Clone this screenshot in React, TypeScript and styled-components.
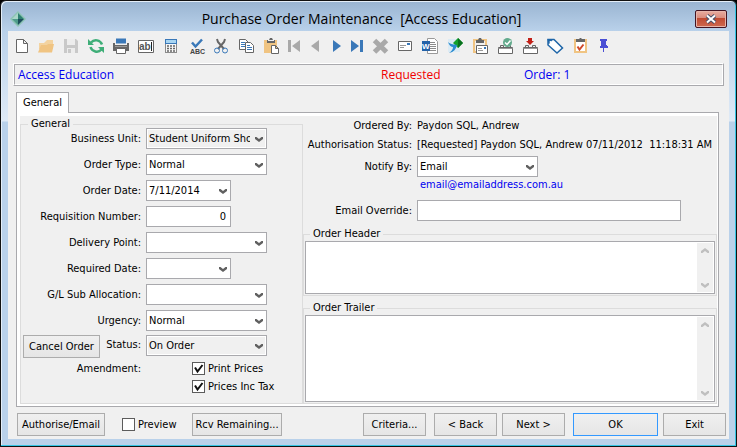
import React, { useState } from "react";
import styled, { createGlobalStyle, css } from "styled-components";

const face = "#f0f0f0";
const line = "#a9a9ad";
const soft = "#dcdcdc";
const grey = "#666666";
const blue = "#3a78b8";

const GlobalStyle = createGlobalStyle`
  *, *::before, *::after { box-sizing: border-box; }
  body { margin: 0; background: #000; }
  body, button, input, select, textarea {
    font-family: "DejaVu Sans Condensed", "DejaVu Sans", Tahoma, sans-serif;
    font-size: 11px;
    line-height: 14px;
    color: #000;
  }
`;

const Frame = styled.div`
  display: flex;
  flex-direction: column;
  min-height: 100vh;
  border: 1px solid #111;
  border-radius: 6px 6px 0 0;
  background: #b9d1ea;
  box-shadow: inset -1px -1px 0 #35c5e4, inset 1px 1px 0 #e4eef8;
  background-image: linear-gradient(#99b4d1, #b9d1ea 30px, #dfeaf6 120px, #b9d1ea 121px);
  padding: 1px 7px 7px;
`;

const TitleBar = styled.header`
  display: flex;
  align-items: center;
  height: 29px;
  padding: 4px 2px 0;
`;

const Title = styled.h1`
  flex: 1;
  margin: 0;
  padding-left: 2px;
  text-align: center;
  white-space: pre;
  font: 400 14px/20px "Open Sans", "Segoe UI", sans-serif;
`;

const CloseButton = styled.button`
  display: flex;
  align-items: center;
  justify-content: center;
  width: 32px;
  height: 18px;
  padding: 0;
  border: 1px solid #431422;
  border-radius: 2px;
  background: linear-gradient(#e8aca0, #d98b7c 45%, #bf4a32 46%, #cf6a50);
  box-shadow: inset 0 0 0 1px #e6b4aa;
`;

const Client = styled.main`
  display: flex;
  flex: 1;
  flex-direction: column;
  background: ${face};
`;

const Toolbar = styled.div`
  display: flex;
  height: 32px;
  padding: 5px 1px 0;
`;

const ToolButton = styled.button<{ $narrow?: boolean }>`
  flex: none;
  width: ${(p) => (p.$narrow ? 21 : 25)}px;
  height: 20px;
  padding: 0;
  border: 0;
  background: none;
  svg { display: block; }
`;

const Banner = styled.div`
  margin: 0 5px;
  border: 1px solid;
  border-color: #fff ${line} ${line} #fff;
`;

const BannerInner = styled.div`
  display: grid;
  grid-template-columns: 363px 143px 1fr;
  height: 21px;
  padding-left: 3px;
  border: 1px solid;
  border-color: ${line} #fff #fff ${line};
  font-family: "Open Sans", "Segoe UI", sans-serif;
  font-size: 12px;
  line-height: 20px;
  color: #0000f0;
`;

const Requested = styled.span`
  color: #f00000;
`;

const TabStrip = styled.div`
  display: flex;
  padding: 6px 8px 0;
`;

const Tab = styled.button`
  width: 53px;
  height: 21px;
  margin-bottom: -1px;
  padding: 0;
  border: 1px solid ${line};
  border-bottom: 0;
  background: #fff;
  z-index: 1;
`;

const TabPage = styled.section`
  display: flex;
  flex: 1;
  margin: 0 10px 0 8px;
  padding: 3px 1px 2px 3px;
  border: 1px solid ${line};
  background: #fff;
`;

const Columns = styled.div`
  display: flex;
  flex: 1;
  background: ${face};
`;

const Group = styled.fieldset<{ $fill?: boolean }>`
  display: flex;
  flex-direction: column;
  ${(p) => p.$fill && css`flex: 1;`}
  min-width: 0;
  margin: 0;
  padding: 0 1px 1px;
  border: 1px solid ${soft};
  legend {
    height: 14px;
    margin-left: 5px;
    padding: 0 3px;
  }
`;

const LeftGroup = styled(Group)`
  flex: none;
  width: 283px;
  margin-top: 1px;
  padding: 0 2px;
`;

const FieldList = styled.div`
  display: flex;
  flex-direction: column;
  gap: 5px;
  margin-top: -3px;
`;

const Row = styled.div`
  display: flex;
  align-items: center;
  height: 21px;
`;

const StatusRow = styled(Row)`
  align-items: flex-start;
  height: 23px;
  margin-top: 4px;
`;

const Label = styled.label<{ $wide?: boolean }>`
  flex: none;
  width: ${(p) => (p.$wide ? 109 : 118)}px;
  margin-right: 5px;
  text-align: right;
  white-space: nowrap;
`;

const StatusLabel = styled.label`
  flex: 1;
  margin-right: 5px;
  line-height: 20px;
  text-align: right;
`;

const StatusLead = styled.div`
  display: flex;
  flex: none;
  width: 123px;
`;

const ComboWrap = styled.div<{ $short?: boolean }>`
  display: grid;
  flex: none;
  width: ${(p) => (p.$short ? 85 : 121)}px;
  height: 21px;
  align-items: center;
  > * { grid-area: 1 / 1; }
  svg { justify-self: end; margin-right: 4px; pointer-events: none; }
`;

const ComboSelect = styled.select<{ $muted?: boolean }>`
  width: 100%;
  height: 21px;
  padding: 0 16px 0 2px;
  border: 1px solid ${line};
  border-radius: 0;
  appearance: none;
  background: ${(p) => (p.$muted ? face : "#fff")};
  box-shadow: inset 0 0 0 1px #fff;
`;

const TextBox = styled.input<{ $number?: boolean }>`
  height: 21px;
  border: 1px solid ${line};
  background: #fff;
  ${(p) =>
    p.$number
      ? css`width: 85px; padding: 0 4px 0 2px; text-align: right;`
      : css`flex: 1; min-width: 0; margin-right: 36px; padding: 0 2px;`}
`;

const Button = styled.button<{ $size?: "lead" | "cancel" | "wide" | "ok"; $primary?: boolean }>`
  flex: none;
  width: ${(p) => ({ lead: 88, cancel: 77, wide: 90, ok: 85, base: 63 })[p.$size ?? "base"]}px;
  height: 23px;
  padding: 0;
  border: 1px solid ${(p) => (p.$primary ? "#3399ff" : "#acacac")};
  background: linear-gradient(#f0f0f0, #e5e5e5);
  white-space: nowrap;
`;

const Amendments = styled.div`
  display: flex;
  padding-top: 3px;
  line-height: 16px;
`;

const CheckList = styled.div`
  display: flex;
  flex-direction: column;
  gap: 5px;
  padding: 1px 0 0 46px;
`;

const CheckLabel = styled.label`
  display: flex;
  align-items: center;
  gap: 3px;
  height: 13px;
  white-space: nowrap;
`;

const CheckHolder = styled.span`
  display: grid;
  > * { grid-area: 1 / 1; }
  svg { pointer-events: none; }
`;

const CheckInput = styled.input`
  width: 13px;
  height: 13px;
  margin: 0;
  appearance: none;
  border: 1px solid #5c5c5c;
  background: #fff;
`;

const RightColumn = styled.div`
  display: flex;
  flex: 1;
  flex-direction: column;
  min-width: 0;
`;

const Info = styled.div`
  display: flex;
  height: 19px;
  align-items: center;
  white-space: pre;
`;

const NotifyRow = styled(Row)`
  margin-top: 2px;
`;

const MailLink = styled.a`
  align-self: flex-start;
  margin: 1px 0 8px 117px;
  color: #0000f0;
  text-decoration: none;
`;

const Groups = styled.div`
  display: flex;
  flex: 1;
  flex-direction: column;
  gap: 5px;
  margin-top: 6px;
`;

const MemoBox = styled.div<{ $fill?: boolean }>`
  display: flex;
  ${(p) => (p.$fill ? css`flex: 1;` : css`height: 53px;`)}
  padding: 1px;
  border: 1px solid ${line};
  background: #fff;
`;

const MemoText = styled.textarea`
  flex: 1;
  min-width: 0;
  min-height: 20px;
  padding: 1px;
  border: 0;
  resize: none;
  overflow: hidden;
`;

const Rail = styled.div`
  display: flex;
  flex-direction: column;
  align-items: center;
  justify-content: space-between;
  width: 16px;
  padding: 5px 0 4px;
  background: ${face};
`;

const Footer = styled.footer`
  display: flex;
  align-items: flex-start;
  gap: 5px;
  height: 32px;
  padding: 6px 3px 0 9px;
`;

const Preview = styled.div`
  flex: none;
  width: 77px;
  padding: 5px 0 0 12px;
`;

const Spacer = styled.div`
  flex: 1;
`;

const Pair = styled.div`
  display: flex;
  gap: 8px;
`;

const Chevron = ({ up, color = "#606060" }: { up?: boolean; color?: string }) => (
  <svg width="8" height="6" viewBox="0 0 8 6" aria-hidden="true">
    <path d={up ? "M0 5V3l4-3 4 3v2H6.500L4 3 1.500 5z" : "M0 1v2l4 3 4-3V1H6.500L4 3 1.500 1z"} fill={color} />
  </svg>
);

type ComboProps = { id: string; label: string; value?: string; short?: boolean; muted?: boolean };

const Combo = ({ id, value = "", short, muted }: Omit<ComboProps, "label">) => (
  <ComboWrap $short={short}>
    <ComboSelect id={id} $muted={muted} defaultValue={value}>
      <option value={value}>{value}</option>
    </ComboSelect>
    <Chevron />
  </ComboWrap>
);

const ComboRow = ({ label, ...rest }: ComboProps) => (
  <Row>
    <Label htmlFor={rest.id}>{label}</Label>
    <Combo {...rest} />
  </Row>
);

const CheckBox = ({ label, initial = false }: { label: string; initial?: boolean }) => {
  const [on, setOn] = useState(initial);
  return (
    <CheckLabel>
      <CheckHolder>
        <CheckInput type="checkbox" checked={on} onChange={() => setOn(!on)} />
        {on && (
          <svg width="13" height="13" viewBox="0 0 13 13" aria-hidden="true">
            <path d="M3 5.500l2.500 4L10.500 3" fill="none" stroke="#111" strokeWidth="2" />
          </svg>
        )}
      </CheckHolder>
      {label}
    </CheckLabel>
  );
};

const Memo = ({ title, fill }: { title: string; fill?: boolean }) => (
  <Group $fill={fill}>
    <legend>{title}</legend>
    <MemoBox $fill={fill}>
      <MemoText aria-label={title} />
      <Rail>
        <Chevron up color="#bfbfbf" />
        <Chevron color="#bfbfbf" />
      </Rail>
    </MemoBox>
  </Group>
);

const tray = (
  <g fill="#fff" stroke={grey}>
    <path d="M5.500 11.500h14v6h-14z" />
    <path d="M7.500 11.500v-2h3v2M14.500 11.500v-2h3v2" fill="none" />
    <path d="M5.500 12.500h14" stroke="#999" />
  </g>
);

const tools: { name: string; narrow?: boolean; art: React.ReactNode }[] = [
  { name: "New", art: <path d="M7.500 3.500h7l4 4v9h-11zM14.500 3.500v4h4" fill="#fff" stroke={grey} /> },
  {
    name: "Open",
    art: (
      <>
        <path d="M5 7h5l1.500-1.500L13 4h6v9H5z" fill="#f3d3a0" />
        <path d="M4 16.500L7 9h6l1-1h6l-2 8.500z" fill="#f0c482" />
      </>
    ),
  },
  {
    name: "Save",
    art: (
      <>
        <path d="M5 3h12l2 2v12H5z" fill="#c9c9c9" />
        <path d="M8 3h8v6H8zM8 12h8v5H8z" fill="#ededed" />
        <path d="M9 13h3v4H9z" fill="#c9c9c9" />
      </>
    ),
  },
  {
    name: "Refresh",
    art: (
      <>
        <path d="M7 6.500A6.500 6.500 0 0 1 18 8.500M17.500 13.500A6.500 6.500 0 0 1 6.500 11" fill="none" stroke="#3fae78" strokeWidth="2.500" />
        <path d="M4 3V9h6zM20 17V11h-6z" fill="#3fae78" />
      </>
    ),
  },
  {
    name: "Print",
    art: (
      <>
        <path d="M7 2.500h10v5H7z" fill={blue} />
        <path d="M4 7h2v2h12V7h2v8H4z" fill={grey} />
        <path d="M7.500 12.500h9v5h-9z" fill="#fff" stroke={grey} />
        <path d="M6 10h12v1H6z" fill="#999" />
      </>
    ),
  },
  {
    name: "Edit text",
    art: (
      <>
        <path d="M4.500 4.500h15v12h-15z" fill="#fff" stroke={grey} />
        <text x="5" y="14" fontSize="10" fontWeight="700" fontFamily="Liberation Sans" fill="#555">ab</text>
        <path d="M17.500 6v9" stroke="#222" />
      </>
    ),
  },
  {
    name: "Calculator",
    art: (
      <>
        <path d="M6 3h12v14H6z" fill="#8b8b8b" />
        <path d="M6 3h12v5H6z" fill={blue} />
        <path d="M7 4h10v3H7z" fill="#a8d5f2" />
        <path d="M7 8h10v8H7z" fill="#f7f7f7" />
        <path d="M8 10h8M8 12.500h8M8 15h8" stroke={grey} strokeWidth="1.500" strokeDasharray="2 1" />
      </>
    ),
  },
  {
    name: "Spell check",
    art: (
      <>
        <path d="M8 6.500l3.500 4L18 3.500" fill="none" stroke={blue} strokeWidth="2.500" />
        <text x="6" y="18" fontSize="7" fontWeight="700" fontFamily="Liberation Sans" fill="#444">ABC</text>
      </>
    ),
  },
  {
    name: "Cut",
    art: (
      <g fill="none">
        <path d="M8 3l1 3 6 7M16 3l-1 3-6 7" stroke={grey} strokeWidth="2" />
        <circle cx="8" cy="14.500" r="2.500" stroke={blue} />
        <circle cx="16" cy="14.500" r="2.500" stroke={blue} />
      </g>
    ),
  },
  {
    name: "Copy",
    art: (
      <>
        <path d="M5.500 3.500h6l3 3v7h-9z" fill="#fff" stroke={grey} />
        <path d="M7 6.500h4M7 8.500h4M7 10.500h4" stroke={blue} />
        <path d="M11.500 6.500h5l3 3v7h-8z" fill="#fff" stroke={grey} />
        <path d="M13 9.500h3M13 11.500h5M13 13.500h5" stroke={blue} />
      </>
    ),
  },
  {
    name: "Paste",
    art: (
      <>
        <path d="M5 4h13v13H5z" fill="#f0c482" />
        <path d="M8 4h2l1-2h2l1 2h2v3H8z" fill={grey} />
        <path d="M9 4h6v1H9z" fill="#eee" />
        <path d="M12.500 9.500h4l3 3v5h-7zM16.500 9.500v3h3" fill="#fff" stroke={grey} />
      </>
    ),
  },
  { name: "First", narrow: true, art: <path d="M4 4h3v12H4zM16 4v12l-8-6z" fill="#a9a9a9" /> },
  { name: "Previous", narrow: true, art: <path d="M14 4v12l-8-6z" fill="#a9a9a9" /> },
  { name: "Next record", narrow: true, art: <path d="M7 4v12l8-6z" fill={blue} /> },
  { name: "Last", narrow: true, art: <path d="M4 4v12l8-6zM13 4h3v12h-3z" fill={blue} /> },
  {
    name: "Delete",
    art: <path d="M6.500 4.500l12 11.500M18.500 4.500l-12 11.500" stroke="#a9a9a9" strokeWidth="5" />,
  },
  {
    name: "Mail",
    art: (
      <>
        <path d="M5.500 5.500h13v9h-13z" fill="#fff" stroke={grey} />
        <path d="M7 9.500h6M7 11.500h4" stroke="#999" />
        <path d="M14 7h3v2h-3z" fill={blue} />
      </>
    ),
  },
  {
    name: "Word",
    art: (
      <>
        <path d="M9.500 2.500h7l3 3v12h-10z" fill="#fff" stroke="#999" />
        <path d="M12 6.500h5M12 8.500h6M12 10.500h6M12 12.500h6M12 14.500h6" stroke="#8b8b8b" />
        <path d="M4 5h8v10H4z" fill="#2362a8" />
        <text x="4" y="13" fontSize="8" fontWeight="700" fontFamily="Liberation Sans" fill="#fff">W</text>
      </>
    ),
  },
  {
    name: "Transfer",
    art: (
      <>
        <path d="M5 3h12v13H5z" fill="#dcebf4" />
        <path d="M15 2l5 5-5 5-5-5z" fill="#12a02c" />
        <path d="M15 2l5 5-5 5z" fill="#08701d" />
        <path d="M5 6c3 3 6 2 9 3-1 4-3 7-8 8 3-2 4-4 4-6-2 0-4-2-5-5z" fill="#2a8bd0" />
      </>
    ),
  },
  {
    name: "Clipboard mail",
    art: (
      <>
        <path d="M6 4h12v12H6z" fill="none" stroke="#f0c482" strokeWidth="2" />
        <path d="M8 4h2l1-2h2l1 2h2v3H8z" fill={grey} />
        <path d="M8.500 9.500h11v8h-11z" fill="#fff" stroke={grey} />
        <path d="M10 12.500h4M10 14.500h5" stroke="#999" />
        <path d="M16 11h2v2h-2z" fill={blue} />
      </>
    ),
  },
  {
    name: "Approve",
    art: (
      <>
        {tray}
        <circle cx="14.500" cy="6.500" r="4.500" fill="#62aa8c" />
        <path d="M12 6.500l2 2 3.500-4" fill="none" stroke="#fff" strokeWidth="1.500" />
      </>
    ),
  },
  {
    name: "Receive",
    art: (
      <>
        {tray}
        <path d="M10 2h4v3h2l-4 4-4-4h2z" fill="#c22018" />
      </>
    ),
  },
  {
    name: "Tag",
    art: (
      <>
        <path d="M5 3.500h6l8.500 8.500-5.500 5L5 9z" fill="#fff" stroke="#1f66a8" strokeWidth="1.500" />
        <path d="M4.500 3h6l-5 5.500z" fill="#1f66a8" />
        <circle cx="7.500" cy="6" r="1" fill="#fff" />
      </>
    ),
  },
  {
    name: "Clipboard check",
    art: (
      <>
        <path d="M7 4h11v12H7z" fill="#fff" stroke="#f0c482" strokeWidth="2" />
        <path d="M8 3h3l1-1h1l1 1h3v3H8z" fill={grey} />
        <path d="M9.500 10.500l2 3 4-5" fill="none" stroke="#cf4a2c" strokeWidth="2" />
      </>
    ),
  },
  {
    name: "Pin",
    art: <path d="M7 3h7v2h-1v4h1v1h1v2h-4v4h-1v-4H7v-2h1V5H7z" fill="#4a4fd4" />,
  },
];

export default function App() {
  return (
    <>
      <GlobalStyle />
      <Frame>
        <TitleBar>
          <svg width="16" height="16" viewBox="0 0 16 16" aria-hidden="true">
            <path d="M8 0l8 8-8 8-8-8z" fill="#8cc3b4" />
            <path d="M8 2l6 6H8z" fill="#2f8273" />
            <path d="M8 2v6H2z" fill="#a9d6c9" />
            <path d="M2 8h6v6z" fill="#4e9c8b" />
            <path d="M8 8h6l-6 6z" fill="#1c4f5c" />
          </svg>
          <Title>{"Purchase Order Maintenance  [Access Education]"}</Title>
          <CloseButton aria-label="Close">
            <svg width="12" height="10" viewBox="0 0 12 10" aria-hidden="true">
              <path d="M2 1.500l8 7M10 1.500l-8 7" stroke="#47506a" strokeWidth="4" />
              <path d="M2 1.500l8 7M10 1.500l-8 7" stroke="#fff" strokeWidth="2" />
            </svg>
          </CloseButton>
        </TitleBar>
        <Client>
          <Toolbar role="toolbar">
            {tools.map((t) => (
              <ToolButton key={t.name} $narrow={t.narrow} aria-label={t.name}>
                <svg width={t.narrow ? 21 : 25} height="20" aria-hidden="true">
                  {t.art}
                </svg>
              </ToolButton>
            ))}
          </Toolbar>
          <Banner>
            <BannerInner>
              <span>Access Education</span>
              <Requested>Requested</Requested>
              <span>Order: 1</span>
            </BannerInner>
          </Banner>
          <TabStrip role="tablist">
            <Tab role="tab" aria-selected="true">General</Tab>
          </TabStrip>
          <TabPage role="tabpanel" aria-label="General">
            <Columns>
              <LeftGroup>
                <legend>General</legend>
                <FieldList>
                  <ComboRow id="unit" label="Business Unit:" value="Student Uniform Shop" muted />
                  <ComboRow id="type" label="Order Type:" value="Normal" />
                  <ComboRow id="date" label="Order Date:" value="7/11/2014" short />
                  <Row>
                    <Label htmlFor="requisition">Requisition Number:</Label>
                    <TextBox id="requisition" $number defaultValue="0" />
                  </Row>
                  <ComboRow id="delivery" label="Delivery Point:" />
                  <ComboRow id="required" label="Required Date:" short />
                  <ComboRow id="allocation" label="G/L Sub Allocation:" />
                  <ComboRow id="urgency" label="Urgency:" value="Normal" />
                </FieldList>
                <StatusRow>
                  <StatusLead>
                    <Button $size="cancel">Cancel Order</Button>
                    <StatusLabel htmlFor="status">Status:</StatusLabel>
                  </StatusLead>
                  <Combo id="status" value="On Order" muted />
                </StatusRow>
                <Amendments>
                  <Label as="span">Amendment:</Label>
                  <CheckList>
                    <CheckBox label="Print Prices" initial />
                    <CheckBox label="Prices Inc Tax" initial />
                  </CheckList>
                </Amendments>
              </LeftGroup>
              <RightColumn>
                <Info>
                  <Label as="span" $wide>Ordered By:</Label>
                  Paydon SQL, Andrew
                </Info>
                <Info>
                  <Label as="span" $wide>Authorisation Status:</Label>
                  {"[Requested] Paydon SQL, Andrew 07/11/2012  11:18:31 AM"}
                </Info>
                <NotifyRow>
                  <Label htmlFor="notify" $wide>Notify By:</Label>
                  <Combo id="notify" value="Email" />
                </NotifyRow>
                <MailLink href="mailto:email@emailaddress.com.au">email@emailaddress.com.au</MailLink>
                <Row>
                  <Label htmlFor="override" $wide>Email Override:</Label>
                  <TextBox id="override" />
                </Row>
                <Groups>
                  <Memo title="Order Header" />
                  <Memo title="Order Trailer" fill />
                </Groups>
              </RightColumn>
            </Columns>
          </TabPage>
          <Footer>
            <Button $size="lead">Authorise/Email</Button>
            <Preview>
              <CheckBox label="Preview" />
            </Preview>
            <Button $size="wide">Rcv Remaining...</Button>
            <Spacer />
            <Pair>
              <Button>Criteria...</Button>
              <Button>&lt; Back</Button>
            </Pair>
            <Pair>
              <Button>Next &gt;</Button>
              <Button $size="ok" $primary>OK</Button>
            </Pair>
            <Button>Exit</Button>
          </Footer>
        </Client>
      </Frame>
    </>
  );
}
